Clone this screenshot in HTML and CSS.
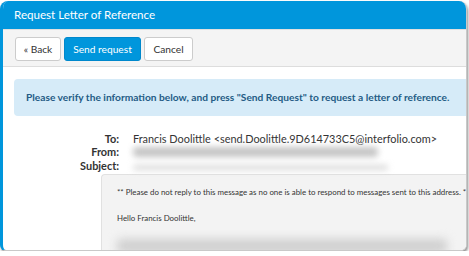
FILE: index.html
```html
<!DOCTYPE html>
<html lang="en">
<head>
    <meta charset="UTF-8">
    <title>Request Letter of Reference</title>
    <link rel="stylesheet" href="styles.css">
</head>
<body>
    <div class="window">
        <header class="title-bar">Request Letter of Reference</header>

        <div class="toolbar">
            <button class="btn btn-back">&laquo; Back</button>
            <button class="btn btn-primary">Send request</button>
            <button class="btn btn-cancel">Cancel</button>
        </div>

        <main class="content">
            <div class="notice">Please verify the information below, and press "Send Request" to request a letter of reference.</div>

            <div class="fields">
                <div class="label">To:</div>
                <div class="value">Francis Doolittle &lt;send.Doolittle.9D614733C5@interfolio.com&gt;</div>
                <div class="label">From:</div>
                <div class="value"><span class="blur blur-from"></span></div>
                <div class="label">Subject:</div>
                <div class="value"><span class="blur blur-subject"></span></div>
            </div>

            <div class="message">
                <p class="note">** Please do not reply to this message as no one is able to respond to messages sent to this address. **</p>
                <p>Hello Francis Doolittle,</p>
                <div class="blur blur-body"></div>
            </div>
        </main>
    </div>
</body>
</html>
```

FILE: styles.css
```css
/* Request letter dialog */
body { margin: 0; font-family: Lato, "Open Sans", Arial, sans-serif; background: #fff; overflow: hidden; }
.window {
    width: 463px; height: 249px; margin-top: 1px;
    border: 1px solid #c9c9c9; border-left: 3px solid #0096dc; border-top: 0;
    border-radius: 8px 8px 6px 6px; overflow: hidden;
    box-shadow: 1px 2px 3px rgba(0,0,0,0.45);
    display: flex; flex-direction: column; background: #fff;
}
.title-bar { background: #0096dc; color: #fff; font-size: 11.6px; height: 28px; line-height: 28px; padding-left: 11px; flex-shrink: 0; }
.toolbar { background: #f4f4f4; border-top: 1px solid #e0e0e0; border-bottom: 1px solid #ddd; height: 38px; padding: 7px 0 0 12px; box-sizing: border-box; display: flex; gap: 3px; flex-shrink: 0; }
.btn { font-family: inherit; font-size: 10.2px; height: 24px; padding: 0; background: #fff; color: #333; border: 1px solid #ccc; border-radius: 3px; }
.btn-back { width: 46px; }
.btn-primary { background: #0096dc; color: #fff; border-color: #0088cc; width: 77px; }
.btn-cancel { width: 49px; }
.content { padding: 12px 0 0 11px; flex: 1; display: flex; flex-direction: column; }
.notice { background: #d6ebf8; color: #245b85; font-weight: bold; font-size: 10.2px; height: 37px; line-height: 37px; padding-left: 12px; border-radius: 4px 0 0 4px; white-space: nowrap; }
.fields { display: grid; grid-template-columns: 105px auto; column-gap: 14px; font-size: 10.9px; line-height: 13px; color: #333; margin-top: 16px; }
.label { text-align: right; font-weight: bold; }
.value { white-space: nowrap; }
.blur { display: inline-block; background: #c4c4c4; filter: blur(3px); border-radius: 4px; }
.blur-from { width: 245px; height: 10px; margin-top: 2px; }
.blur-subject { width: 255px; height: 5px; background: #d8d8d8; }
.message { margin: 2px 0 0 87px; flex: 1; background: #f3f3f3; border: 1px solid #e1e1e1; border-right: 0; border-bottom: 0; border-radius: 4px 0 0 0; padding: 12px 0 0 15px; font-size: 7.9px; color: #333; white-space: nowrap; overflow: hidden; }
.message p { margin: 0 0 16px; }
.blur-body { display: block; width: 330px; height: 14px; background: #cfcfcf; filter: blur(5px); margin-top: 0; }
```
